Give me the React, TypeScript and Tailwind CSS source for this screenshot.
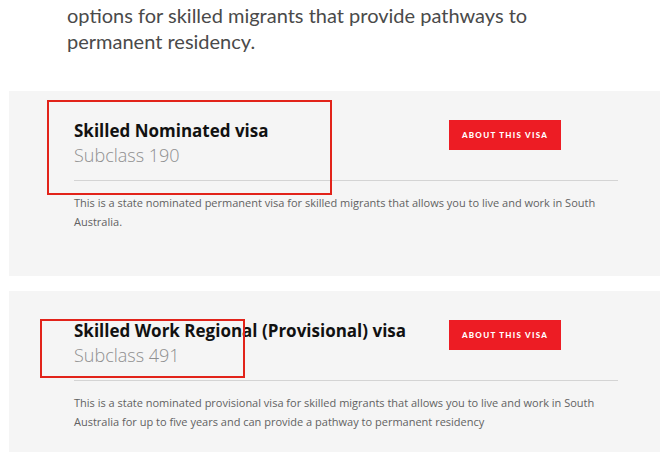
const visas = [
  {
    title: 'Skilled Nominated visa',
    subclass: 'Subclass 190',
    text: 'This is a state nominated permanent visa for skilled migrants that allows you to live and work in South Australia.',
  },
  {
    title: 'Skilled Work Regional (Provisional) visa',
    subclass: 'Subclass 491',
    text: 'This is a state nominated provisional visa for skilled migrants that allows you to live and work in South Australia for up to five years and can provide a pathway to permanent residency',
  },
]

function VisaCard({ title, subclass, text }: { title: string; subclass: string; text: string }) {
  return (
    <div className="ml-[9px] bg-[#f5f5f5] pl-[65px] pr-[42px] pt-[29px] pb-[45px] font-['Open_Sans',sans-serif]">
      <div className="flex items-start">
        <div className="w-[375px]">
          <h3 className="text-[17px] leading-[22px] font-bold text-[#111]">{title}</h3>
          <p className="mt-[2px] text-[18px] leading-[22px] font-light text-[#8f8f8f]">{subclass}</p>
        </div>
        <button className="h-[30px] w-[112px] bg-[#ed1c24] font-['Lato',sans-serif] text-[8px] font-black tracking-[0.16em] text-white">
          ABOUT THIS VISA
        </button>
      </div>
      <div className="mt-[14px] h-px bg-[#d4d4d4]" />
      <p className="mt-[12px] text-[11px] leading-[19px] text-[#626262]">{text}</p>
    </div>
  )
}

export default function App() {
  return (
    <div className="relative h-[452px] w-[660px] overflow-hidden bg-white font-['Lato',sans-serif]">
      <p className="pl-[67px] pt-[2px] text-[20px] leading-[26px] text-[#4a4a4a]">
        options for skilled migrants that provide pathways to
        <br />
        permanent residency.
      </p>
      <div className="mt-[37px] flex flex-col gap-[15px]">
        {visas.map(v => (
          <VisaCard key={v.subclass} {...v} />
        ))}
      </div>
      {/* annotation boxes */}
      <div className="absolute left-[47px] top-[100px] h-[95px] w-[285px] border-2 border-[#e2231a]" />
      <div className="absolute left-[40px] top-[319px] h-[59px] w-[205px] border-2 border-[#e2231a]" />
    </div>
  )
}
